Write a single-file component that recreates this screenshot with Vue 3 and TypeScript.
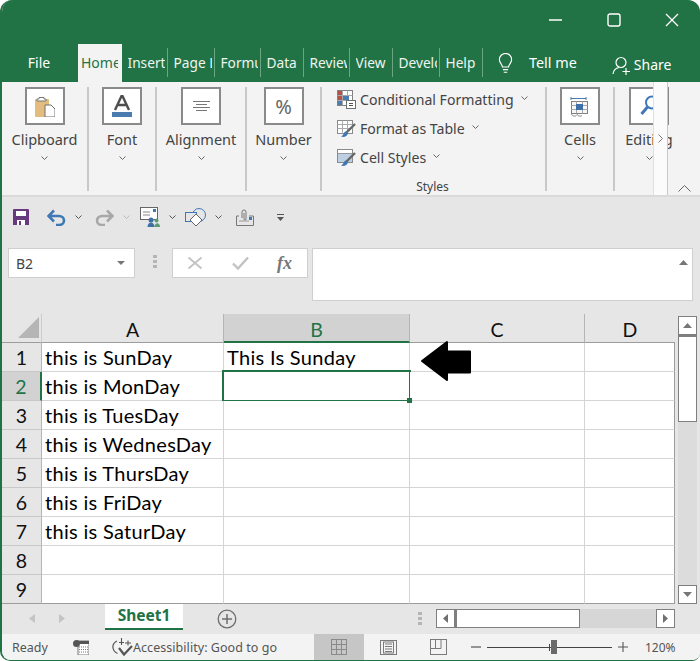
<script setup lang="ts">
const tabs = [
  { label: 'Home', w: 44, active: true },
  { label: 'Insert', w: 46 },
  { label: 'Page Layout', w: 47 },
  { label: 'Formulas', w: 46 },
  { label: 'Data', w: 43 },
  { label: 'Review', w: 46 },
  { label: 'View', w: 43 },
  { label: 'Developer', w: 47 },
  { label: 'Help', w: 43 },
]
const columns = [
  { name: 'A', w: 182 },
  { name: 'B', w: 186, selected: true },
  { name: 'C', w: 175 },
  { name: 'D', w: 90 },
]
const rows = [
  ['this is SunDay', 'This Is Sunday'],
  ['this is MonDay', ''],
  ['this is TuesDay', ''],
  ['this is WednesDay', ''],
  ['this is ThursDay', ''],
  ['this is FriDay', ''],
  ['this is SaturDay', ''],
  ['', ''],
  ['', ''],
]
</script>

<template>
  <div class="win">
    <header class="title">
      <svg class="wc" width="14" height="14" viewBox="0 0 14 14"><path d="M0 7h13" stroke="#fff" stroke-width="1.4" /></svg>
      <svg class="wc" width="14" height="14" viewBox="0 0 14 14"><rect x="1" y="1" width="12" height="12" rx="2" fill="none" stroke="#fff" stroke-width="1.4" /></svg>
      <svg class="wc" width="14" height="14" viewBox="0 0 14 14"><path d="M1 1l12 12M13 1L1 13" stroke="#fff" stroke-width="1.3" /></svg>
    </header>

    <nav class="tabs">
      <div class="file">File</div>
      <div v-for="t in tabs" :key="t.label" class="tab" :class="{ active: t.active }" :style="{ width: t.w + 'px' }"><span>{{ t.label }}</span></div>
      <svg class="bulb" width="17" height="21" viewBox="0 0 18 24" fill="none" stroke="#fff" stroke-width="1.3">
        <path d="M5.5 16c0-3-3.5-4.500-3.500-8.500a7 7 0 0 1 14 0c0 4-3.500 5.500-3.500 8.500z" />
        <path d="M6 19h6M7 22h4" />
      </svg>
      <div class="tell">Tell me</div>
      <svg class="person" width="20" height="20" viewBox="0 0 20 20" fill="none" stroke="#fff" stroke-width="1.2">
        <circle cx="9" cy="6.500" r="5" />
        <path d="M1 18c.5-4 3-6 6-6.500M14 12v7M10.500 15.500h7.500" />
      </svg>
      <div class="share">Share</div>
    </nav>

    <section class="ribbon">
      <div class="group g-clip">
        <div class="box">
          <svg width="20" height="21" viewBox="0 0 20 21">
            <rect x="0" y="3" width="14" height="18" rx="1" fill="#e3bc7f" />
            <path d="M4 3V1.500h5V3h2v2H2V3z" fill="#fff" stroke="#77787a" />
            <path d="M10 9h6l4 4v8H10z" fill="#fff" stroke="#707070" />
          </svg>
        </div>
        <div class="glabel">Clipboard</div>
        <svg class="chev" width="7" height="4" viewBox="0 0 7 4"><path d="M.5.500l3 3 3-3" fill="none" stroke="#666" /></svg>
      </div>
      <div class="group g-font">
        <div class="box">
          <svg width="20" height="22" viewBox="0 0 20 22">
            <path d="M10 0L3 15M10 0l7 15M5.500 10h9" fill="none" stroke="#4e4e4e" stroke-width="2.400" />
            <rect x="0" y="17" width="20" height="5" fill="#4a7cb0" />
          </svg>
        </div>
        <div class="glabel">Font</div>
        <svg class="chev" width="7" height="4" viewBox="0 0 7 4"><path d="M.5.500l3 3 3-3" fill="none" stroke="#666" /></svg>
      </div>
      <div class="group g-align">
        <div class="box">
          <svg width="17" height="10" viewBox="0 0 17 10"><path d="M0 .5h17M3 3.500h11M0 6.500h17M3 9.500h11" stroke="#777" /></svg>
        </div>
        <div class="glabel">Alignment</div>
        <svg class="chev" width="7" height="4" viewBox="0 0 7 4"><path d="M.5.500l3 3 3-3" fill="none" stroke="#666" /></svg>
      </div>
      <div class="group g-num">
        <div class="box pct">%</div>
        <div class="glabel">Number</div>
        <svg class="chev" width="7" height="4" viewBox="0 0 7 4"><path d="M.5.500l3 3 3-3" fill="none" stroke="#666" /></svg>
      </div>
      <div class="group g-styles">
        <div class="srow">
          <svg width="19" height="19" viewBox="0 0 19 19">
            <rect x=".5" y=".5" width="15" height="15" fill="#fff" stroke="#808080" />
            <path d="M.5 5.500h15M.5 10.500h15M5.500.5v15M10.500.5v15" stroke="#a8a8a8" />
            <rect x="1" y="1" width="4" height="4" fill="#b5534a" /><rect x="6" y="6" width="6" height="4" fill="#4a7cb0" /><rect x="1" y="6" width="4" height="4" fill="#b5534a" /><rect x="1" y="11" width="4" height="4" fill="#4a7cb0" />
            <rect x="9.500" y="10.500" width="9" height="8" fill="#fff" stroke="#707070" />
            <path d="M12 13.500h4M12 15.500h4" stroke="#555" />
          </svg>
          <span>Conditional Formatting</span>
          <svg class="chev-s" width="7" height="4" viewBox="0 0 7 4"><path d="M.5.500l3 3 3-3" fill="none" stroke="#666" /></svg>
        </div>
        <div class="srow">
          <svg width="19" height="18" viewBox="0 0 19 18">
            <rect x=".5" y=".5" width="15" height="13" fill="#fff" stroke="#8a8a8a" />
            <path d="M.5 4.500h15M.5 8.500h15M5.500.5v13M10.500.5v13" stroke="#aaa" />
            <path d="M18 4L9 13" stroke="#666" stroke-width="2.400" />
            <path d="M9 11.500c-2 .5-2.500 2-3 3.500l-2 1.500c3 1 6 0 7-3z" fill="#3f78b5" />
          </svg>
          <span>Format as Table</span>
          <svg class="chev-s" width="7" height="4" viewBox="0 0 7 4"><path d="M.5.500l3 3 3-3" fill="none" stroke="#666" /></svg>
        </div>
        <div class="srow">
          <svg width="19" height="18" viewBox="0 0 19 18">
            <rect x=".5" y=".5" width="15" height="13" fill="#fff" stroke="#8a8a8a" />
            <rect x="1" y="5" width="14" height="8" fill="#bccfe3" />
            <path d="M.5 4.500h15" stroke="#999" />
            <path d="M18 4L9 13" stroke="#666" stroke-width="2.400" />
            <path d="M9 11.500c-2 .5-2.500 2-3 3.500l-2 1.500c3 1 6 0 7-3z" fill="#3f78b5" />
          </svg>
          <span>Cell Styles</span>
          <svg class="chev-s" width="7" height="4" viewBox="0 0 7 4"><path d="M.5.500l3 3 3-3" fill="none" stroke="#666" /></svg>
        </div>
        <div class="slabel">Styles</div>
      </div>
      <div class="group g-cells">
        <div class="box">
          <svg width="20" height="21" viewBox="0 0 20 21" fill="none">
            <path d="M1 1v3M16 1v3M1 2.500h15" stroke="#4a7cb0" />
            <rect x="1.500" y="5.500" width="16" height="12" fill="#f7f7f7" stroke="#808080" />
            <path d="M1.500 9.500h16M1.500 13.500h16M6.500 5.500v12M12.500 5.500v12" stroke="#a8a8a8" />
            <rect x="6" y="8" width="7" height="6" fill="#3f6fa8" />
            <path d="M1.500 17.500c0 3 4 3 5 2M7 17.500c0 3 4 3 5 2" stroke="#808080" />
          </svg>
        </div>
        <div class="glabel">Cells</div>
        <svg class="chev" width="7" height="4" viewBox="0 0 7 4"><path d="M.5.500l3 3 3-3" fill="none" stroke="#666" /></svg>
      </div>
      <div class="group g-edit">
        <div class="box edit-box">
          <svg class="mag" width="20" height="22" viewBox="0 0 20 22" fill="none" stroke="#3f78b5">
            <circle cx="12" cy="7.500" r="6" stroke-width="2" />
            <path d="M7.500 12L1.500 19" stroke-width="3" />
          </svg>
        </div>
        <div class="glabel">Editing</div>
        <svg class="chev" width="7" height="4" viewBox="0 0 7 4"><path d="M.5.500l3 3 3-3" fill="none" stroke="#666" /></svg>
      </div>
      <div class="more">
        <svg width="5" height="9" viewBox="0 0 5 9"><path d="M.5.500l4 4-4 4" fill="none" stroke="#777" /></svg>
      </div>
      <svg class="collapse" width="13" height="7" viewBox="0 0 13 7"><path d="M.5 6.500l6-6 6 6" fill="none" stroke="#666" /></svg>
    </section>

    <section class="qat">
      <svg class="q-save" width="16" height="16" viewBox="0 0 16 16">
        <path d="M0 1a1 1 0 0 1 1-1h14a1 1 0 0 1 1 1v15H0z" fill="#68397f" />
        <rect x="3" y="2" width="10" height="5" fill="#fff" />
        <rect x="4" y="11" width="8" height="5" fill="#fff" /><rect x="6" y="12" width="2" height="4" fill="#68397f" />
      </svg>
      <svg class="q-undo" width="19" height="17" viewBox="0 0 19 17" fill="none">
        <path d="M2 7h10a5 4.500 0 0 1 0 9H9M7 1.500L1.500 7 7 12.500" stroke="#3f78b5" stroke-width="2.600" />
      </svg>
      <svg class="q-chev" width="7" height="4" viewBox="0 0 7 4"><path d="M.5.500l3 3 3-3" fill="none" stroke="#555" /></svg>
      <svg class="q-redo" width="19" height="17" viewBox="0 0 19 17" fill="none">
        <path d="M17 7H7a5 4.500 0 0 0 0 9h3M12 1.500L17.500 7 12 12.500" stroke="#a8a8a8" stroke-width="2.600" />
      </svg>
      <svg class="q-chev" width="7" height="4" viewBox="0 0 7 4"><path d="M.5.500l3 3 3-3" fill="none" stroke="#bbb" /></svg>
      <svg class="q-mail" width="20" height="20" viewBox="0 0 20 20">
        <rect x=".5" y=".5" width="17" height="12" fill="#fff" stroke="#666" />
        <rect x="13" y="2" width="3" height="3" fill="#3f78b5" />
        <path d="M3 5h7M3 8h7" stroke="#888" />
        <circle cx="11" cy="13" r="2.500" fill="#3f6fa8" /><path d="M7.500 20c0-6 7-6 7 0z" fill="#3f6fa8" />
        <circle cx="16.500" cy="13.500" r="2" fill="#5c9a72" /><path d="M14.500 20c0-5 5.500-5 5.500 0z" fill="#5c9a72" />
      </svg>
      <svg class="q-chev" width="7" height="4" viewBox="0 0 7 4"><path d="M.5.500l3 3 3-3" fill="none" stroke="#555" /></svg>
      <svg class="q-shape" width="21" height="19" viewBox="0 0 21 19" fill="none">
        <circle cx="14" cy="7" r="6.500" fill="#e6e6e6" stroke="#3f78b5" />
        <rect x=".5" y="4.500" width="11" height="9" fill="#e6e6e6" stroke="#3f78b5" />
        <path d="M11 6l6 6-6 6-6-6z" fill="#fff" stroke="#666" />
      </svg>
      <svg class="q-chev" width="7" height="4" viewBox="0 0 7 4"><path d="M.5.500l3 3 3-3" fill="none" stroke="#555" /></svg>
      <svg class="q-clip" width="18" height="17" viewBox="0 0 18 17" fill="none">
        <path d="M3 7H.5v9.500h17V7H13" stroke="#777" />
        <path d="M6 9V3a2 2 0 0 1 4 0v7a1 1 0 0 1-2 0V4" stroke="#777" />
        <rect x="13" y="8" width="3" height="3" fill="#3f78b5" />
        <path d="M3 12h10" stroke="#999" />
      </svg>
      <svg class="q-more" width="7" height="8" viewBox="0 0 7 8"><path d="M0 1.500h7" stroke="#555" /><path d="M0 4h7L3.500 8z" fill="#555" /></svg>
    </section>

    <section class="fbar">
      <div class="namebox">
        <span>B2</span>
        <svg width="8" height="4" viewBox="0 0 8 4"><path d="M0 0h8L4 4z" fill="#777" /></svg>
      </div>
      <div class="grip"><i></i><i></i><i></i></div>
      <div class="fxbox">
        <svg width="16" height="14" viewBox="0 0 16 14"><path d="M1.500 1.500l13 11M14.500 1.500l-13 11" stroke="#c2c2c2" stroke-width="1.800" /></svg>
        <svg width="17" height="14" viewBox="0 0 17 14"><path d="M1 7.500l5 5L16 1.500" fill="none" stroke="#c2c2c2" stroke-width="2.400" /></svg>
        <span class="fx">fx</span>
      </div>
      <div class="finput">
        <svg width="9" height="5" viewBox="0 0 9 5"><path d="M4.500 0L9 5H0z" fill="#777" /></svg>
      </div>
    </section>

    <section class="sheet-area">
      <div class="sheet">
        <div class="hrow">
          <div class="corner"><svg width="21" height="21" viewBox="0 0 21 21"><path d="M21 0v21H0z" fill="#b5b5b5" /></svg></div>
          <div v-for="c in columns" :key="c.name" class="chead" :class="{ sel: c.selected }" :style="{ width: c.w + 'px' }">{{ c.name }}</div>
        </div>
        <div v-for="(r, i) in rows" :key="i" class="drow">
          <div class="rhead" :class="{ sel: i === 1 }">{{ i + 1 }}</div>
          <div v-for="(c, j) in columns" :key="c.name" class="cell" :class="{ active: i === 1 && j === 1 }" :style="{ width: c.w + 'px' }">{{ r[j] }}</div>
        </div>
        <svg class="arrow" width="52" height="42" viewBox="0 0 52 42">
          <path d="M2 21L27 2v9.500h23v21H27V40z" stroke="#000" stroke-width="2" stroke-linejoin="round" />
        </svg>
      </div>
      <div class="vscroll">
        <div class="sbtn"><svg width="9" height="5" viewBox="0 0 9 5"><path d="M4.500 0L9 5H0z" fill="#777" /></svg></div>
        <div class="vthumb"></div>
        <div class="vtrack"></div>
        <div class="sbtn"><svg width="9" height="5" viewBox="0 0 9 5"><path d="M0 0h9L4.500 5z" fill="#777" /></svg></div>
      </div>
    </section>

    <section class="tabbar">
      <svg class="nav1" width="6" height="9" viewBox="0 0 6 9"><path d="M6 0v9L0 4.500z" fill="#c4c4c4" /></svg>
      <svg class="nav2" width="6" height="9" viewBox="0 0 6 9"><path d="M0 0v9l6-4.500z" fill="#c4c4c4" /></svg>
      <div class="sheettab">Sheet1</div>
      <svg class="plus" width="20" height="20" viewBox="0 0 20 20" fill="none" stroke="#6e6e6e">
        <circle cx="10" cy="10" r="8.800" stroke-width="1.300" /><path d="M10 5v10M5 10h10" stroke-width="1.500" />
      </svg>
      <div class="grip hgrip"><i></i><i></i><i></i></div>
      <div class="hscroll">
        <div class="sbtn hb"><svg width="5" height="9" viewBox="0 0 5 9"><path d="M5 0v9L0 4.500z" fill="#707070" /></svg></div>
        <div class="hthumb"></div>
        <div class="htrack"></div>
        <div class="sbtn hb"><svg width="5" height="9" viewBox="0 0 5 9"><path d="M0 0v9l5-4.500z" fill="#707070" /></svg></div>
      </div>
    </section>

    <footer class="status">
      <span class="ready">Ready</span>
      <svg class="st-macro" width="16" height="15" viewBox="0 0 16 15">
        <rect x="5" y="1" width="11" height="14" fill="#fff" stroke="#777" />
        <rect x="5" y="1" width="11" height="3" fill="#555" />
        <circle cx="3.500" cy="3.500" r="3.500" fill="#555" />
        <path d="M6 7h9M6 9.500h9M6 12h9" stroke="#777" stroke-dasharray="1 1" />
      </svg>
      <svg class="st-acc" width="21" height="19" viewBox="0 0 21 19" fill="none" stroke="#555">
        <path d="M5 3C2 4.500.5 7 1 10s2.500 4.500 4.500 5.500" stroke-width="1.200" />
        <path d="M9.500 0v7M7 4.500h5M13 5h6M16 2.500v5" stroke-width="1.100" />
        <path d="M7 10l5 6.500L20 8" stroke-width="2.200" />
      </svg>
      <span class="acc">Accessibility: Good to go</span>
      <div class="view-n">
        <svg width="16" height="16" viewBox="0 0 16 16" fill="none" stroke="#8a8a8a"><rect x=".5" y=".5" width="15" height="15" /><path d="M.5 5.500h15M.5 10.500h15M5.500.5v15M10.500.5v15" /></svg>
      </div>
      <svg class="view-p" width="17" height="15" viewBox="0 0 17 15" fill="none" stroke="#7a7a7a"><rect x=".5" y=".5" width="16" height="14" /><path d="M5 4h7M5 6.500h7M5 9h7M5 11.500h7" /><rect x="3.500" y="2" width="10" height="11" /></svg>
      <svg class="view-b" width="17" height="16" viewBox="0 0 17 16" fill="none" stroke="#7a7a7a"><rect x=".5" y=".5" width="16" height="15" /><path d="M.5 9.500h10.500V.5M5.500.5v9" /></svg>
      <svg class="z-minus" width="10" height="2" viewBox="0 0 10 2"><path d="M0 1h10" stroke="#555" stroke-width="1.200" /></svg>
      <div class="slider"><i class="tick"></i><i class="knob"></i></div>
      <svg class="z-plus" width="10" height="10" viewBox="0 0 10 10"><path d="M0 5h10M5 0v10" stroke="#555" stroke-width="1.100" /></svg>
      <span class="zoom">120%</span>
    </footer>
  </div>
</template>

<style scoped>
* { box-sizing: border-box; }
.win {
  position: relative;
  width: 700px;
  height: 661px;
  display: flex;
  flex-direction: column;
  overflow: hidden;
  background: #e6e6e6;
  border-left: 2px solid #217346;
  border-bottom: 1px solid #217346;
  border-radius: 12px 12px 8px 10px;
  font-family: "Noto Sans", sans-serif;
  color: #444;
}
.title {
  flex: none;
  height: 44px;
  margin-left: -2px;
  background: #217346;
  display: flex;
  align-items: center;
  justify-content: flex-end;
  gap: 44px;
  padding: 0 21px 4px 0;
}
.tabs {
  flex: none;
  height: 38px;
  margin-left: -2px;
  background: #217346;
  display: flex;
  align-items: stretch;
  color: #fff;
  font-size: 14px;
}
.file { width: 78px; text-align: center; line-height: 37px; }
.tab { position: relative; white-space: nowrap; padding: 0 3.500px 0 5.500px; line-height: 37px; font-size: 13.700px; color: #eef5f0; flex: none; }
.tab span { display: block; overflow: hidden; }
.tab::after { content: ""; position: absolute; right: 0; top: 4px; bottom: 5px; width: 1px; background: #6ba583; }
.tab.active { background: #f3f3f3; color: #217346; padding: 0 4px 0 3px; font-size: 14px; }
.tab.active::after { display: none; }
.bulb { margin: 9px 0 0 14px; flex: none; }
.tell { margin-left: 15px; line-height: 37px; font-size: 14.400px; }
.person { margin: 12px 0 0 35px; flex: none; }
.share { margin-left: 2px; line-height: 41px; }
.ribbon {
  flex: none;
  position: relative;
  height: 115px;
  background: #f3f3f3;
  border-bottom: 2px solid #dadada;
  display: flex;
  padding: 5px 0 4px;
  font-size: 14.500px;
}
.group { display: flex; flex-direction: column; align-items: center; border-right: 2px solid #c8c8c8; flex: none; }
.g-clip { width: 87px; }
.g-font { width: 68px; }
.g-align { width: 90px; }
.g-num { width: 75px; }
.g-styles { width: 225px; align-items: flex-start; padding-left: 15px; position: relative; font-size: 14.100px; }
.g-cells { width: 68px; }
.g-edit { width: 68px; border-right: 0; padding-left: 0; }
.box {
  flex: none;
  width: 40px;
  height: 38px;
  background: #fff;
  border: 2px solid #8a8a8a;
  display: flex;
  align-items: center;
  justify-content: center;
}
.pct { font-size: 20px; color: #666; }
.edit-box { overflow: hidden; justify-content: flex-start; padding-left: 9px; }
.mag { flex: none; }
.glabel { margin-top: 4px; line-height: 20px; white-space: nowrap; color: #444; }
.chev { margin-top: 7px; flex: none; }
.chev-s { margin-left: 3px; margin-top: -3px; flex: none; }
.srow { flex: none; display: flex; align-items: center; gap: 4px; height: 29px; white-space: nowrap; }
.srow:first-child { margin-top: -2px; }
.slabel { align-self: center; margin: 5px 0 0 -17px; font-size: 12px; line-height: 20px; flex: none; }
.more {
  position: absolute;
  left: 651px;
  top: 0;
  bottom: 0;
  width: 15px;
  background: #fbfbfb;
  border-left: 1px solid #e0e0e0;
  border-right: 1px solid #c8c8c8;
  display: flex;
  align-items: center;
  justify-content: center;
}
.collapse { position: absolute; right: 9px; bottom: 3px; }
.qat { height: 51px; display: flex; align-items: center; padding: 0 0 11px 11px; flex: none; }
.qat svg { flex: none; }
.q-chev { margin-left: 9px; }
.q-undo { margin-left: 18px; }
.q-redo { margin-left: 13px; }
.q-mail { margin-left: 10px; }
.q-shape { margin-left: 9px; }
.q-clip { margin-left: 14px; }
.q-more { margin-left: 23px; }
.fbar { height: 53px; display: flex; align-items: flex-start; padding-left: 6px; flex: none; }
.namebox {
  width: 127px;
  height: 30px;
  background: #fff;
  border: 1px solid #cfcfcf;
  display: flex;
  align-items: center;
  justify-content: space-between;
  padding: 0 9px 0 7px;
  font-size: 14px;
}
.grip { display: flex; flex-direction: column; gap: 2px; margin: 7px 0 0 18px; }
.grip i { width: 4px; height: 3px; background: #b5b5b5; display: block; }
.fxbox {
  width: 136px;
  height: 30px;
  margin-left: 15px;
  background: #fff;
  border: 1px solid #cfcfcf;
  display: flex;
  align-items: center;
  justify-content: space-between;
  padding: 0 15px 0 14px;
}
.fx { font-family: "Liberation Serif", serif; font-style: italic; font-weight: 700; font-size: 18px; color: #777; }
.finput {
  width: 381px;
  height: 53px;
  margin-left: 4px;
  background: #fff;
  border: 1px solid #cfcfcf;
  display: flex;
  justify-content: flex-end;
  padding: 11px 4px 0 0;
}
.finput svg { display: block; }
.sheet-area { display: flex; height: 290px; margin-top: 13px; flex: none; }
.sheet { position: relative; width: 673px; flex: none; font-family: Lato, sans-serif; }
.hrow { display: flex; height: 29px; }
.corner { width: 40px; display: flex; align-items: flex-end; justify-content: flex-end; padding: 0 2px 4px 0; border-bottom: 1px solid #9c9c9c; border-right: 1px solid #ccc; }
.chead {
  flex: none;
  text-align: center;
  font-size: 19.500px;
  line-height: 31px;
  color: #111;
  border-right: 1px solid #b5b5b5;
  border-bottom: 1px solid #9c9c9c;
}
.chead.sel { background: #d2d2d2; color: #217346; border-bottom: 2px solid #217346; }
.chead:last-child { border-right: 0; }
.drow { display: flex; height: 29px; }
.rhead {
  width: 40px;
  flex: none;
  text-align: center;
  font-size: 19.500px;
  line-height: 30px;
  color: #111;
  border-right: 1px solid #b5b5b5;
  border-bottom: 1px solid #c8c8c8;
}
.rhead.sel { background: #d2d2d2; color: #217346; border-right: 2px solid #217346; }
.cell {
  position: relative;
  flex: none;
  background: #fff;
  border-right: 1px solid #d4d4d4;
  border-bottom: 1px solid #d4d4d4;
  padding-left: 3px;
  font-size: 20px;
  letter-spacing: .3px;
  line-height: 28px;
  color: #000;
  white-space: nowrap;
}
.cell:last-child { border-right: 1px solid #9c9c9c; }
.drow:last-of-type .cell, .drow:last-of-type .rhead { border-bottom: 1px solid #9c9c9c; }
.cell.active::after {
  content: "";
  position: absolute;
  left: -2px;
  top: -2px;
  right: -2px;
  bottom: -2px;
  border: 2px solid #217346;
}
.cell.active::before {
  content: "";
  position: absolute;
  right: -3px;
  bottom: -3px;
  width: 5px;
  height: 5px;
  background: #217346;
  z-index: 1;
}
.arrow { position: absolute; left: 418px; top: 26px; }
.vscroll { width: 19px; margin: 2px 0 0 3px; display: flex; flex-direction: column; flex: none; background: #dcdcdc; }
.sbtn { flex: none; width: 19px; height: 19px; background: #fff; border: 1px solid #7f7f7f; display: flex; align-items: center; justify-content: center; }
.vthumb { height: 87px; background: #fff; border: 1px solid #7f7f7f; border-top-width: 2px; flex: none; }
.vtrack { flex: 1; }
.tabbar { position: relative; height: 30px; display: flex; align-items: flex-start; flex: none; }
.tabbar svg { flex: none; }
.nav1 { margin: 10px 0 0 27px; }
.nav2 { margin: 10px 0 0 24px; }
.sheettab {
  margin-left: 40px;
  width: 78px;
  height: 26px;
  background: #fff;
  border-bottom: 2px solid #217346;
  text-align: center;
  font-weight: 700;
  font-size: 15.500px;
  line-height: 22px;
  color: #217346;
  flex: none;
}
.plus { margin: 5px 0 0 34px; }
.hgrip { margin: 8px 0 0 181px; }
.hscroll { display: flex; height: 19px; width: 239px; margin: 5px 0 0 14px; background: #d6d6d6; flex: none; }
.hb { height: 19px; }
.hthumb { width: 125px; background: #fff; border: 1px solid #7f7f7f; border-left-width: 2px; flex: none; }
.htrack { flex: 1; }
.status { height: 26px; display: flex; align-items: center; background: #f3f3f3; font-size: 12.500px; flex: none; position: relative; color: #555; }
.status svg { flex: none; }
.ready { margin-left: 10px; width: 61px; flex: none; }
.st-acc { margin-left: 23px; }
.acc { width: 181px; white-space: nowrap; letter-spacing: .05px; flex: none; }
.view-n { width: 50px; align-self: stretch; background: #c6c6c6; display: flex; align-items: center; justify-content: center; flex: none; }
.view-p { margin-left: 16px; }
.view-b { margin-left: 33px; }
.z-minus { margin-left: 24px; }
.slider { position: relative; width: 125px; height: 1px; background: #444; margin-left: 6px; flex: none; }
.tick { position: absolute; left: 62px; top: -3px; width: 1px; height: 7px; background: #444; }
.knob { position: absolute; left: 64px; top: -7px; width: 6px; height: 14px; background: #6a6a6a; }
.z-plus { margin-left: 6px; }
.zoom { margin-left: 17px; font-size: 12px; flex: none; }
</style>

<style>
html, body { margin: 0; background: #fff; }
</style>
